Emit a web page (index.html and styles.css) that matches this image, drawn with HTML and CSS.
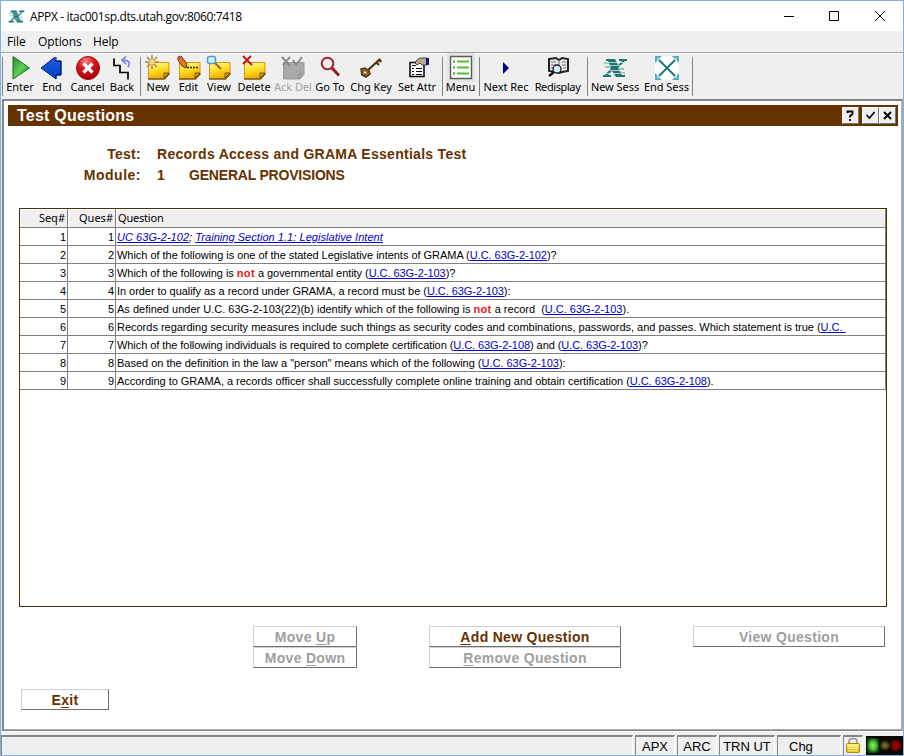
FILE: index.html
```html
<!DOCTYPE html>
<html lang="en">
<head>
<meta charset="utf-8">
<title>APPX - itac001sp.dts.utah.gov:8060:7418</title>
<link rel="stylesheet" href="styles.css">
</head>
<body>
<svg class="defs" width="0" height="0">
  <defs>
    <linearGradient id="green" x1="0" y1="0" x2="1" y2="1"><stop offset="0" stop-color="#23872a"/><stop offset=".5" stop-color="#62cf55"/><stop offset="1" stop-color="#178a22"/></linearGradient>
    <linearGradient id="blue" x1="0" y1="0" x2="0" y2="1"><stop offset="0" stop-color="#1b5be0"/><stop offset="1" stop-color="#0a3fc4"/></linearGradient>
    <radialGradient id="red" cx=".4" cy=".2" r=".8"><stop offset="0" stop-color="#f58a8a"/><stop offset=".45" stop-color="#d9161d"/><stop offset="1" stop-color="#a80008"/></radialGradient>
    <linearGradient id="yellow" x1="0" y1="0" x2=".3" y2="1"><stop offset="0" stop-color="#fff8a8"/><stop offset=".5" stop-color="#ffe22e"/><stop offset="1" stop-color="#f2ae00"/></linearGradient>
    <linearGradient id="gold" x1="0" y1="0" x2="0" y2="1"><stop offset="0" stop-color="#fff68c"/><stop offset="1" stop-color="#e0ae00"/></linearGradient>
    <radialGradient id="ledG"><stop offset="0" stop-color="#8cf060"/><stop offset=".6" stop-color="#43b52c"/><stop offset="1" stop-color="#104a0b"/></radialGradient>
    <radialGradient id="ledY"><stop offset="0" stop-color="#807a38"/><stop offset="1" stop-color="#252408"/></radialGradient>
    <radialGradient id="ledR"><stop offset="0" stop-color="#b00808"/><stop offset="1" stop-color="#450000"/></radialGradient>
    <symbol id="note" viewBox="0 0 26 26"><path d="M3.500 7.500h20.500v11l-4.500 5H3.500z" fill="url(#yellow)" stroke="#d09a10"/><path d="M3 24h16.500l5-5.500" fill="none" stroke="#7a5a12" stroke-width="1.300"/><path d="M19 23v-5h5z" fill="#d7a42a" stroke="#6b4d11" stroke-width=".9"/></symbol>
    <symbol id="xlogo" viewBox="0 0 26 26"><path d="M4 4h9l3 6 4-4h-3V4h8v2h-2l-7 7 4 7h3v2h-9l-4-6-4 4h3v2H1v-2h2l6-7-3-7H4z" fill="#1d7775"/><path d="M2 8h6M3 12h6M16 14h6M18 18h5" stroke="#4b9694"/><path d="M4 7.500h20M4 10.500h18M4 15.500h18M2 18.500h20" stroke="#e6eeee" stroke-width=".7"/></symbol>
  </defs>
</svg>
<div class="window">
  <header class="titlebar">
    <svg class="app-icon" width="17" height="17"><use href="#xlogo"/></svg>
    <span class="app-title">APPX - itac001sp.dts.utah.gov:8060:7418</span>
    <svg class="captions" width="112" height="16" fill="none" stroke="#000"><path d="M4 8.500h10M49.500 3.500h9v9h-9z"/><path d="M95 3l10 10M105 3L95 13"/></svg>
  </header>
  <nav class="menubar"><span class="m-file">File</span><span class="m-options">Options</span><span class="m-help">Help</span></nav>
  <div class="toolbar">
    <i class="sep first"></i>
    <div class="tool w32"><svg width="26" height="26"><path d="M6 1.500L22.500 13 6 24z" fill="url(#green)" stroke="#157020"/></svg><span>Enter</span></div>
    <div class="tool w32"><svg width="26" height="26"><path d="M2 13L16 2v4h6v14h-5v4z" fill="url(#blue)" stroke="#082c8e"/><path d="M17 2v4h5v14h-5v4" fill="none" stroke="#001d66"/></svg><span>End</span></div>
    <div class="tool w39"><svg width="26" height="26"><circle cx="13" cy="13" r="11.500" fill="url(#red)" stroke="#a50c10"/><path d="M8.500 8.500l9 9M17.500 8.500l-9 9" stroke="#fff" stroke-width="3.200"/></svg><span>Cancel</span></div>
    <div class="tool w30"><svg width="26" height="26"><path d="M5 3.500v7h6v7h8v7" fill="none" stroke="#000" stroke-width="1.700"/><path d="M19 12c3-5 0-7-6-7M17 1.500L13 5l4 4" fill="none" stroke="#8588dc" stroke-width="1.800"/></svg><span>Back</span></div>
    <i class="sep w6"></i>
    <div class="tool w30"><svg width="26" height="26"><use href="#note"/><path d="M7 0v14M0 7h14M2 2l10 10M12 2L2 12" stroke="#b1884e" stroke-width="1.500"/><circle cx="7" cy="7" r="2.500" fill="#f5d77b"/></svg><span>New</span></div>
    <div class="tool w31"><svg width="26" height="26"><use href="#note"/><path d="M2 2l3-1 6 8-1 4-4-2-4-6z" fill="#e87b16" stroke="#59341c"/><path d="M2 2l3-1 1.500 2-3 2z" fill="#cb5e58"/><path d="M11 12.500h2M14 12.500h2M17 12.500h2M20 12.500h2" stroke="#352600" stroke-width="1.500"/></svg><span>Edit</span></div>
    <div class="tool w30"><svg width="26" height="26"><use href="#note"/><path d="M9 8l6 6" stroke="#aa5b19" stroke-width="2"/><rect x="1.500" y="1.500" width="8" height="7" rx="2" fill="#c6efff" stroke="#5b9ac7" stroke-width="1.500"/></svg><span>View</span></div>
    <div class="tool w40"><svg width="26" height="26"><use href="#note"/><path d="M2 1l9 9M10 1L2 9" stroke="#c60c0c" stroke-width="1.800"/></svg><span>Delete</span></div>
    <div class="tool w38 disabled"><svg width="26" height="26"><path d="M3.500 7.500H24v12l-4 4.500H3.500z" fill="#a9a9a9" stroke="#999"/><path d="M2 2l8 9M10 2L3 10M13 5l3 5 6-8" fill="none" stroke="#8b8b8b" stroke-width="2"/><path d="M19 24v-5h4" fill="none" stroke="#888"/></svg><span>Ack Del</span></div>
    <div class="tool w36"><svg width="26" height="26"><circle cx="10.500" cy="8.500" r="5.800" fill="#f7eded" stroke="#a1202a" stroke-width="2"/><path d="M15 13l7 7.500" stroke="#9a1925" stroke-width="3"/></svg><span>Go To</span></div>
    <div class="tool w46"><svg width="26" height="26"><path d="M9 16L22 4M18 7l3 3M21 4l2 3" stroke="#4c3518" stroke-width="2.300"/><path d="M3 14l4-1 4 3 1 3-4 3-4-2z" fill="#956820" stroke="#4b3316" stroke-width="1.500"/><path d="M6 17l2 1" stroke="#eee" stroke-width="1.500"/></svg><span>Chg Key</span></div>
    <div class="tool w46"><svg width="26" height="26"><path d="M6 7.500h14v14H6z" fill="#fff" stroke="#000" stroke-width="1.500"/><path d="M8 13.500h2M12 13.500h6M8 16.500h2M12 16.500h6M8 19.500h2M12 19.500h6M8 10.500h4" stroke="#111"/><path d="M12 6l4-3h7v7h-5l-2-2-3 2-2-2z" fill="#b8ab8c" stroke="#444"/><path d="M22 3h3v7h-3z" fill="#101090"/></svg><span>Set Attr</span></div>
    <i class="sep w5"></i>
    <div class="tool w31 menu"><svg width="26" height="26"><path d="M2.500 1.500h21v22h-21z" fill="#fff" stroke="#555e55" stroke-width="1.400"/><path d="M9 6.500h12M9 12.500h12M9 18.500h12" stroke="#55bb35" stroke-width="1.800"/><path d="M5 6.500h2M5 12.500h2M5 18.500h2" stroke="#55bb35" stroke-width="2.500"/></svg><span>Menu</span></div>
    <i class="sep w6"></i>
    <div class="tool w48"><svg width="26" height="26"><path d="M10 7l6 6-6 6z" fill="#00008b"/></svg><span>Next Rec</span></div>
    <div class="tool w55"><svg width="26" height="26"><path d="M4 4l7-1 3 2 3-2 6 1v12l-6 1-3 1-3-1-7-1z" fill="#e8e8e8" stroke="#222" stroke-width="2"/><path d="M14 5v10M6 7h5M6 10h5M17 7h4M17 10h4M6 13h3M18 13h3" stroke="#777"/><circle cx="12" cy="14" r="4" fill="#d0f5fa" stroke="#222" stroke-width="1.300"/><path d="M9 17l-5 4" stroke="#111" stroke-width="2.500"/></svg><span>Redisplay</span></div>
    <i class="sep w4"></i>
    <div class="tool w52"><svg width="26" height="26"><use href="#xlogo"/></svg><span>New Sess</span></div>
    <div class="tool w51"><svg width="26" height="26"><rect x="1" y="1" width="24" height="24" fill="#fff"/><path d="M5 5l16 16M21 5L5 21" stroke="#247879" stroke-width="2"/><path d="M1 1h7L1 8zM25 1h-7l7 7zM1 25h7l-7-7zM25 25h-7l7-7z" fill="#5aacba"/><path d="M3 3h2v2H3zM21 3h2v2h-2zM3 21h2v2H3zM21 21h2v2h-2z" fill="#9de4ee"/></svg><span>End Sess</span></div>
    <i class="sep last"></i>
  </div>
  <main class="panel">
    <div class="formbar"><span class="formname">Test Questions</span>
      <span class="box help"><svg width="15" height="15"><path d="M4.500 5V3.500h5V6L7 8v1.500M7 11v2" fill="none" stroke="#000" stroke-width="1.800"/></svg></span>
      <span class="box"><svg width="15" height="15"><path d="M3.500 7l3 3 5-6" fill="none" stroke="#000" stroke-width="1.600"/></svg></span>
      <span class="box"><svg width="15" height="15"><path d="M4 4l7 7M11 4l-7 7" stroke="#000" stroke-width="1.900"/></svg></span>
    </div>
    <div class="fields">
      <div class="field"><label>Test:</label><b>Records Access and GRAMA Essentials Test</b></div>
      <div class="field"><label class="wide">Module:</label><b class="num">1</b><b class="module">GENERAL PROVISIONS</b></div>
    </div>
    <div class="grid">
      <div class="row head"><span>Seq#</span><span>Ques#</span><span>Question</span></div>
      <div class="row"><span>1</span><span>1</span><span class="intro"><a>UC 63G-2-102</a>; <a>Training Section 1.1: Legislative Intent</a></span></div>
      <div class="row"><span>2</span><span>2</span><span class="tight">Which of the following is one of the stated Legislative intents of GRAMA (<a>U.C. 63G-2-102</a>)?</span></div>
      <div class="row"><span>3</span><span>3</span><span class="tighter">Which of the following is <strong>not</strong> a governmental entity (<a>U.C. 63G-2-103</a>)?</span></div>
      <div class="row"><span>4</span><span>4</span><span class="tighter">In order to qualify as a record under GRAMA, a record must be (<a>U.C. 63G-2-103</a>):</span></div>
      <div class="row"><span>5</span><span>5</span><span>As defined under U.C. 63G-2-103(22)(b) identify which of the following is <strong>not</strong> a record&nbsp; (<a>U.C. 63G-2-103</a>).</span></div>
      <div class="row"><span>6</span><span>6</span><span class="slight">Records regarding security measures include such things as security codes and combinations, passwords, and passes. Which statement is true (<a>U.C.&nbsp;</a></span></div>
      <div class="row"><span>7</span><span>7</span><span class="tightest">Which of the following individuals is required to complete certification (<a>U.C. 63G-2-108</a>) and (<a>U.C. 63G-2-103</a>)?</span></div>
      <div class="row"><span>8</span><span>8</span><span class="slight">Based on the definition in the law a "person" means which of the following (<a>U.C. 63G-2-103</a>):</span></div>
      <div class="row"><span>9</span><span>9</span><span class="tight">According to GRAMA, a records officer shall successfully complete online training and obtain certification (<a>U.C. 63G-2-108</a>).</span></div>
    </div>
    <div class="actions">
      <div class="move"><button class="off">Move <u>U</u>p</button><button class="off">Move <u>D</u>own</button></div>
      <div class="edit"><button><u>A</u>dd New Question</button><button class="off"><u>R</u>emove Question</button></div>
      <div class="view"><button class="off">View Question</button></div>
    </div>
    <button class="exit">E<u>x</u>it</button>
  </main>
  <footer class="status">
    <span class="cell message"></span><span class="cell apx">APX</span><span class="cell arc">ARC</span><span class="cell trn">TRN UT</span><span class="cell mode">Chg</span>
    <span class="cell lock"><svg width="18" height="18"><path d="M5 7V4.500q0-3 4-3t4 3V7" fill="none" stroke="#999" stroke-width="1.700"/><rect x="2.500" y="6.500" width="13" height="9" rx="1" fill="url(#gold)" stroke="#a98900"/><path d="M4 9h10M4 11.500h10M4 14h10" stroke="#fff5a4" stroke-width=".8"/></svg></span>
    <svg class="leds" width="37" height="19"><rect width="37" height="19" fill="#0b0805"/><rect x="1" y="2" width="12" height="15" rx="3" fill="url(#ledG)"/><circle cx="19" cy="9.500" r="5" fill="url(#ledY)"/><circle cx="30" cy="9.500" r="6" fill="url(#ledR)"/></svg>
  </footer>
</div>
</body>
</html>
```
FILE: styles.css
```css
* { box-sizing: border-box; }
body { margin: 0; overflow: hidden; background: #fff; font-family: "Liberation Sans", sans-serif; color: #000; }
.defs { position: absolute; }
.window { width: 904px; height: 756px; display: flex; flex-direction: column; border: 1px solid #84ade0; background: #efefef; }
.titlebar { height: 30px; flex: none; display: flex; align-items: center; background: #fff; padding-left: 7px; }
.app-title { margin-left: 5px; font: 12px "Open Sans", sans-serif; letter-spacing: -.36px; white-space: nowrap; }
.captions { margin-left: auto; margin-right: 11px; }
.menubar { height: 21px; flex: none; display: flex; align-items: center; font: 12px "Open Sans", sans-serif; letter-spacing: -.1px; padding-left: 6px; }
.m-file { width: 31px; }
.m-options { width: 55px; }
.toolbar { height: 47px; flex: none; display: flex; border-top: 1px solid #a0a0a0; box-shadow: inset 0 1px #fff; padding-left: 3px; }
.tool { display: flex; flex-direction: column; align-items: center; flex: none; padding-top: 2px; }
.tool svg { flex: none; }
.tool span { font: 11px/14px "Noto Sans", sans-serif; letter-spacing: -.05px; white-space: nowrap; margin-top: -1px; }
.tool.w55 span { letter-spacing: -.4px; }
.menu { background: linear-gradient(#e5e5e5, #e5e5e5) center top / 28px 29px no-repeat; }
.disabled span { color: #a3a3a3; }
.w30 { width: 30px; } .w31 { width: 31px; } .w32 { width: 32px; } .w36 { width: 36px; } .w38 { width: 38px; }
.w39 { width: 39px; } .w40 { width: 40px; } .w46 { width: 46px; } .w48 { width: 48px; } .w51 { width: 51px; } .w52 { width: 52px; } .w55 { width: 55px; }
.sep { flex: none; height: 39px; margin-top: 4px; background: linear-gradient(#858585, #858585) center / 1px 100% no-repeat; }
.sep.w4 { width: 4px; } .sep.w5 { width: 5px; } .sep.w6 { width: 6px; }
.sep.first { width: 1px; margin-left: -2px; margin-right: 1px; }
.sep.last { width: 1px; }
.panel { height: 632px; flex: none; margin-left: 1px; border: 2px solid #858585; border-right-color: #aaa; border-bottom: 1px solid #858585; background: #fff; padding: 4px 3px 0 4px; box-shadow: inset 0 -1px #aaa; }
.formbar { height: 21px; background: #663200; color: #fff; display: flex; align-items: center; padding: 0 2px 0 9px; }
.formname { font-size: 16px; line-height: 20px; font-weight: bold; letter-spacing: .22px; margin-right: auto; padding-top: 1px; }
.box { width: 17px; height: 17px; background: #efefef; border: 1px solid #fff; border-right-color: #777; border-bottom-color: #777; display: flex; }
.help { margin-right: 3px; }
.fields { height: 82px; padding-top: 17px; color: #663200; font-size: 14px; font-weight: bold; letter-spacing: .28px; }
.field { height: 21px; display: flex; align-items: center; }
.field label { width: 133px; text-align: right; margin-right: 16px; }
.field .wide { letter-spacing: .5px; }
.module { letter-spacing: -.2px; }
.num { width: 32px; }
.grid { width: 868px; height: 399px; margin-left: 11px; border: 1px solid #4d2f10; }
.row { height: 18px; display: grid; grid-template-columns: 48px 48px 770px; font-size: 11px; line-height: 18px; border-bottom: 1px solid #808080; white-space: nowrap; }
.row > span { border-right: 1px solid #808080; text-align: right; padding-right: 1px; overflow: hidden; }
.row > span:last-child { text-align: left; padding-left: 1px; }
.row.head { height: 19px; background: #efefef; font: 11px/18px "Noto Sans", sans-serif; }
.head > span { box-shadow: inset 1px 1px #fff; }
.row.head > span { padding-right: 2px; }
.row.head > span:last-child { padding-left: 2px; letter-spacing: -.2px; }
.row a { color: #0000cd; text-decoration: underline; }
.row strong { color: #e1191d; letter-spacing: .35px; }
.intro { font-style: italic; letter-spacing: .047px; }
.slight { letter-spacing: -.014px; }
.tight { letter-spacing: -.034px; }
.tighter { letter-spacing: -.05px; }
.tightest { letter-spacing: -.066px; }
.actions { display: flex; margin-top: 19px; height: 42px; padding-left: 245px; }
.actions > div { display: flex; flex-direction: column; }
.move { width: 104px; margin-right: 72px; }
.edit { width: 192px; margin-right: 72px; }
.view { width: 192px; }
button { display: block; height: 21px; padding: 1px 0 0; background: #fff; border: 1px solid; border-color: #d0d0d0 #707070 #707070 #d0d0d0; font: bold 14px/18px "Liberation Sans", sans-serif; letter-spacing: .3px; color: #663200; }
button.off { color: #a0a0a0; }
button u { text-underline-offset: 2px; text-decoration-thickness: 1px; }
.exit { width: 88px; margin: 21px 0 0 13px; }
.status { height: 24px; flex: none; display: flex; align-items: flex-end; gap: 2px; border-top: 1px solid #fff; }
.cell { height: 20px; border-top: 2px solid #858585; border-left: 1px solid #858585; border-right: 1px solid #fff; text-align: center; font-size: 13px; line-height: 19px; white-space: nowrap; }
.message { width: 632px; }
.apx { width: 40px; } .arc { width: 40px; } .trn { width: 56px; } .mode { width: 64px; text-align: left; padding-left: 11px; }
.lock { width: 20px; }
.leds { margin-left: auto; }
```
